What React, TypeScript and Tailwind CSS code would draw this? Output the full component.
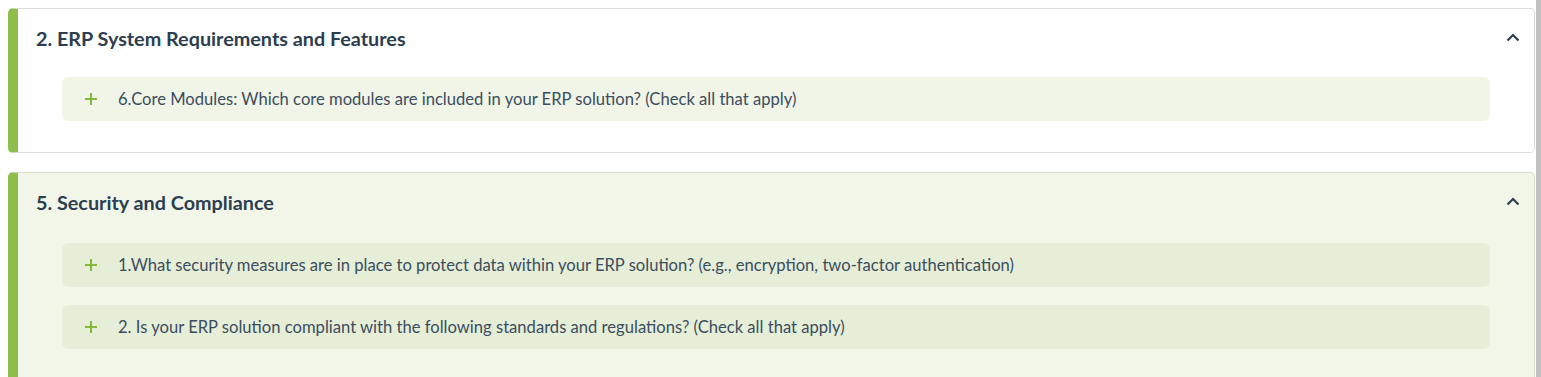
import React from "react";

const Plus = () => (
  <svg width="14" height="14" viewBox="0 0 14 14" className="shrink-0">
    <path d="M7 1v12M1 7h12" stroke="#86b83a" strokeWidth="2" />
  </svg>
);

const Chevron = () => (
  <svg width="14" height="9" viewBox="0 0 14 9">
    <path d="M1.5 7.5L7 2l5.5 5.5" stroke="#2c3e50" strokeWidth="2.2" fill="none" />
  </svg>
);

function Item({ text, bg }: { text: string; bg: string }) {
  return (
    <div className={`flex h-[44px] items-center rounded-[6px] pl-[22px] ${bg}`}>
      <Plus />
      <span className="ml-[20px] text-[16.6px] text-[#3b4d5e]">{text}</span>
    </div>
  );
}

function Card({
  title,
  items,
  cardBg,
  itemBg,
  border,
  bodyPt,
}: {
  title: string;
  items: string[];
  cardBg: string;
  itemBg: string;
  border: string;
  bodyPt: string;
}) {
  return (
    <div className={`rounded-[5px] border ${border} border-l-[10px] border-l-[#8fbd4b] ${cardBg}`}>
      <div className="flex h-[41px] items-end justify-between pl-[18px] pr-[14px]">
        <h2 className="text-[19.8px] font-bold leading-[24px] text-[#2c3e50]">{title}</h2>
        <div className="pb-[8px]">
          <Chevron />
        </div>
      </div>
      <div className={`flex flex-col gap-[18px] pl-[44px] pr-[44px] pb-[31px] ${bodyPt}`}>
        {items.map((t) => (
          <Item key={t} text={t} bg={itemBg} />
        ))}
      </div>
    </div>
  );
}

export default function App() {
  return (
    <div className="flex h-[377px] w-full overflow-hidden bg-white" style={{ fontFamily: 'Lato, "Open Sans", sans-serif' }}>
      <div className="flex flex-1 flex-col gap-[19px] pl-[8px] pr-[1px] pt-[8px]">
        <Card
          title="2. ERP System Requirements and Features"
          items={["6.Core Modules: Which core modules are included in your ERP solution? (Check all that apply)"]}
          cardBg="bg-white"
          itemBg="bg-[#f1f5e8]"
          border="border-[#dcdcdc]"
          bodyPt="pt-[27px]"
        />
        <Card
          title="5. Security and Compliance"
          items={[
            "1.What security measures are in place to protect data within your ERP solution? (e.g., encryption, two-factor authentication)",
            "2. Is your ERP solution compliant with the following standards and regulations? (Check all that apply)",
          ]}
          cardBg="bg-[#f2f6e9]"
          itemBg="bg-[#e6eed8]"
          border="border-[#d5dcc8]"
          bodyPt="pt-[29px]"
        />
      </div>
      <div className="w-[5px] shrink-0 bg-[#c1c1c1]" />
    </div>
  );
}
